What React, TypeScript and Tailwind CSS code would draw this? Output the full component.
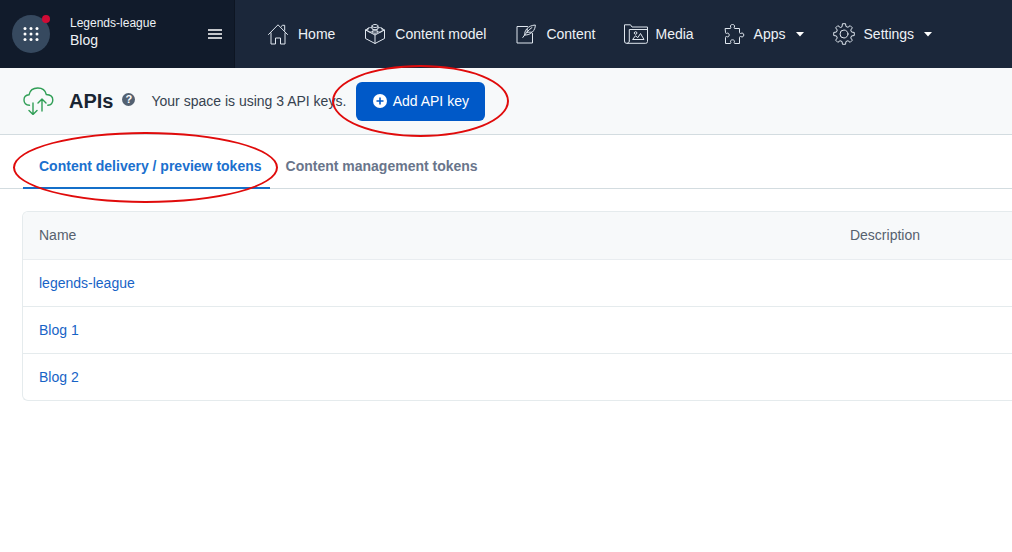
import type { ReactNode } from 'react';

function Icon({ children }: { children: ReactNode }) {
  return (
    <svg
      width="20"
      height="20"
      viewBox="0 0 20 20"
      fill="none"
      stroke="#dfe6ee"
      strokeWidth="1"
      strokeLinejoin="round"
      strokeLinecap="round"
      className="shrink-0 overflow-visible"
      aria-hidden="true"
    >
      {children}
    </svg>
  );
}

const gearPath = (() => {
  const points: string[] = [];
  for (let i = 0; i < 8; i++) {
    const base = (i * Math.PI) / 4;
    const steps: [number, number][] = [
      [-0.25, 7.8],
      [-0.15, 10.4],
      [0.15, 10.4],
      [0.25, 7.8],
    ];
    for (const [angle, radius] of steps) {
      const a = base + angle;
      points.push(`${(10 + radius * Math.sin(a)).toFixed(2)} ${(10 - radius * Math.cos(a)).toFixed(2)}`);
    }
  }
  return `M${points.join('L')}Z`;
})();

const navItems: { label: string; icon: ReactNode; menu?: boolean }[] = [
  {
    label: 'Home',
    icon: (
      <path d="M.5 10.500 10 .8l9.500 9.700M3 9v11h4.500v-6h5v6H17V9M13.200 2.500l1.300-1.200h2.200v5" />
    ),
  },
  {
    label: 'Content model',
    icon: (
      <path d="M.5 6v8.500L10 19.500l9.500-5V6L10 11 .5 6l3-1.800M19.500 6l-3-1.800M10 11v8.500M7 2v2.200c0 .9 1.400 1.500 3 1.500s3-.6 3-1.500V2M7 2c0-.8 1.400-1.500 3-1.500s3 .7 3 1.500-1.400 1.500-3 1.500S7 2.800 7 2M2.800 4.800v2c0 .7 1.200 1.200 2.600 1.200S8 7.500 8 6.800V5.300M2.800 4.800c0-.7 1.200-1.200 2.600-1.200l1.600.3M17.200 4.800v2c0 .7-1.200 1.200-2.600 1.200S12 7.500 12 6.800V5.300M17.200 4.800c0-.7-1.200-1.200-2.600-1.200l-1.600.3M7.300 8c0-.7 1.200-1.200 2.700-1.200s2.700.5 2.700 1.200-1.200 1.200-2.700 1.200S7.300 8.700 7.300 8" />
    ),
  },
  {
    label: 'Content',
    icon: (
      <path d="M11.500 2.500H1V19h15.500V9.500M6.800 13.500C10 9 13 5.500 16 3.500M8.800 11c-1-4 3-9.500 10.500-10C19.500 6 15 11.500 8.800 11M11.200 8.200V5M11.200 8.200h4.500" />
    ),
  },
  {
    label: 'Media',
    icon: (
      <>
        <path d="M-.5 17V.8h6L7 3h15.500v14.500a1.800 1.800 0 0 1-1.800 1.800H1.500A2 2 0 0 1-.5 17M4.300 17V5.500h18.200M4.300 17c0 1.500-.8 2.300-2.300 2.300" />
        <path d="M8 15.500h11l-3.500-6-2.700 4.200-2-1.700zM9.300 9a1.300 1.300 0 1 0 2.600 0 1.300 1.300 0 1 0-2.600 0" />
      </>
    ),
  },
  {
    label: 'Apps',
    menu: true,
    icon: (
      <path d="M1.500 4.500H6c1 0 1-.8.600-1.500C6 1.500 7 .5 8.500.5S11 1.500 10.400 3c-.4.700-.4 1.500.6 1.500h4.500v4c0 1 .8 1.300 1.500.8 1.500-.8 2.800.2 2.800 1.700s-1.300 2.500-2.800 1.700c-.7-.5-1.500-.2-1.500.8v6H11c-1 0-1.100-.7-.7-1.400.6-1.300-.3-2.300-1.800-2.300s-2.400 1-1.800 2.300c.4.700.3 1.400-.7 1.400H1.500v-6c0-1 .6-1.200 1.300-.8 1.400.7 2.400-.3 2.400-1.700S4.200 8.600 2.800 9.300c-.7.400-1.300.2-1.300-.8z" />
    ),
  },
  {
    label: 'Settings',
    menu: true,
    icon: (
      <>
        <path d={gearPath} />
        <circle cx="10" cy="10" r="4" />
      </>
    ),
  },
];

const apiKeys = ['legends-league', 'Blog 1', 'Blog 2'];

function Highlight({ className }: { className: string }) {
  return <span aria-hidden="true" className={`pointer-events-none absolute z-10 rounded-[50%] border-2 border-[#e00b0b] ${className}`} />;
}

function TopBar() {
  return (
    <header className="flex h-[68px] bg-[#1b273a] text-sm text-[#eef2f6]">
      <div className="flex w-[235px] shrink-0 items-center border-r border-[#0d1522] bg-[#111b2b] px-3">
        <button type="button" aria-label="Switch app" className="relative flex size-[38px] shrink-0 items-center justify-center rounded-full bg-[#36495f]">
          <svg width="16" height="16" viewBox="0 0 16 16" fill="#ffffff" aria-hidden="true">
            {[2.5, 8, 13.5].flatMap((y) => [2, 8, 14].map((x) => <circle key={`${x}-${y}`} cx={x} cy={y} r="1.5" />))}
          </svg>
          <span className="absolute top-0 right-0 size-2 rounded-full bg-[#d00b35]" />
        </button>
        <div className="ml-5 flex flex-1 flex-col pb-1">
          <span className="text-xs leading-4">Legends-league</span>
          <span className="text-sm leading-[18px]">Blog</span>
        </div>
        <button type="button" aria-label="Open space menu" className="flex justify-center">
          <svg width="14" height="10" viewBox="0 0 14 10" stroke="#ffffff" strokeWidth="1.600" aria-hidden="true">
            <path d="M0 1h14M0 5h14M0 9h14" />
          </svg>
        </button>
      </div>
      <nav className="flex items-center gap-[30px] pl-[33px]">
        {navItems.map((item) => (
          <a key={item.label} href="#" className="flex items-center gap-2.5 whitespace-nowrap">
            <Icon>{item.icon}</Icon>
            {item.label}
            {item.menu && (
              <svg width="8" height="5" viewBox="0 0 8 5" fill="#ffffff" aria-hidden="true">
                <path d="M0 0h8L4 4.500z" />
              </svg>
            )}
          </a>
        ))}
      </nav>
    </header>
  );
}

function PageHeader() {
  return (
    <section className="flex h-[67px] items-center border-b border-[#d3dce0] bg-[#f7f9fa] pl-[23px]">
      <svg width="31" height="28" viewBox="0 0 31 28" fill="none" stroke="#2f9e55" strokeWidth="1.400" strokeLinecap="round" strokeLinejoin="round" className="shrink-0" aria-hidden="true">
        <path d="M6.500 18.300C3 18 1 15.700 1 12.900 1 10 3.200 8 6 7.800 6.900 3.500 10.500 1 14.800 1c4.500 0 7.600 2.600 8.500 6.500 4 .2 6.500 2.400 6.500 5.500 0 2.900-2 5-5 5.300M10 16v11.500M6 23.500l4 4 4-4M19 24V12M15 16l4-4 4 4" />
      </svg>
      <h1 className="ml-[15px] text-xl font-bold text-[#192532]">APIs</h1>
      <button type="button" aria-label="About API keys" className="mr-4 mb-1 ml-[9px] flex size-[13px] items-center justify-center rounded-full bg-[#536171] text-[11px] leading-none font-bold text-white">
        ?
      </button>
      <p className="text-sm whitespace-nowrap text-[#36424f]">Your space is using 3 API keys.</p>
      <div className="relative ml-2.5">
        <button type="button" className="flex h-[39px] w-[129px] items-center justify-center gap-1.5 rounded-md bg-[#0059c8] pb-px text-sm text-white">
          <svg width="14" height="14" viewBox="0 0 14 14" aria-hidden="true">
            <circle cx="7" cy="7" r="7" fill="#ffffff" />
            <path d="M7 3.500v7M3.500 7h7" stroke="#0059c8" strokeWidth="1.600" />
          </svg>
          Add API key
        </button>
        <Highlight className="-top-[17px] -right-6 -bottom-4 -left-6" />
      </div>
    </section>
  );
}

function Tabs() {
  return (
    <div role="tablist" className="flex h-[54px] border-b border-[#d3dce0] pl-[23px] text-sm font-bold">
      <button type="button" role="tab" aria-selected="true" className="relative -mb-px border-b-2 border-[#146fc9] pt-2.5 pr-2 pl-4 text-[#1b70ce]">
        Content delivery / preview tokens
        <Highlight className="-top-[3px] -right-2 -bottom-4 -left-2.5" />
      </button>
      <button type="button" role="tab" aria-selected="false" className="-mb-px border-b-2 border-transparent pt-2.5 pr-2 pl-4 text-[#69758b]">
        Content management tokens
      </button>
    </div>
  );
}

function KeysTable() {
  return (
    <div className="mt-[22px] ml-[22px] overflow-hidden rounded-l-md border border-r-0 border-[#e5ebed]">
      <table className="w-full table-fixed border-collapse text-left text-sm">
        <thead className="bg-[#f7f9fa] text-[#56616e]">
          <tr className="h-[47px] border-b border-[#e9edf0]">
            <th scope="col" className="w-[82%] px-4 font-normal">Name</th>
            <th scope="col" className="px-4 font-normal">Description</th>
          </tr>
        </thead>
        <tbody>
          {apiKeys.map((name) => (
            <tr key={name} className="h-[47px] border-b border-[#e5ebed] last:border-b-0">
              <td className="px-4">
                <a href="#" className="text-[#1763c6]">{name}</a>
              </td>
              <td />
            </tr>
          ))}
        </tbody>
      </table>
    </div>
  );
}

export default function App() {
  return (
    <div className="min-h-screen overflow-x-hidden bg-white font-['Liberation_Sans',Arial,sans-serif]">
      <TopBar />
      <main>
        <PageHeader />
        <Tabs />
        <KeysTable />
      </main>
    </div>
  );
}
